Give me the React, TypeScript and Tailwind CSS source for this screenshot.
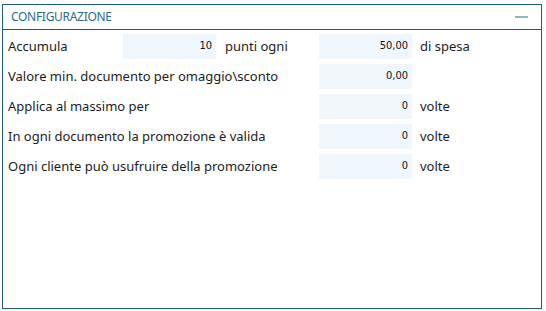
const labelFont = { fontFamily: '"Noto Sans", "Liberation Sans", sans-serif' };

function Field({ value }: { value: string }) {
  return (
    <div className="h-[25px] bg-[#eff7fd] flex items-center justify-end pr-[4px] text-[11px] text-[#111] font-['DejaVu_Sans_Condensed','DejaVu_Sans',sans-serif]">
      {value}
    </div>
  );
}

function Label({ children, className = "" }: { children: React.ReactNode; className?: string }) {
  return (
    <div className={`h-[25px] flex items-center text-[13px] text-[#1c1c1c] whitespace-nowrap ${className}`}>
      {children}
    </div>
  );
}

export default function App() {
  return (
    <div className="w-[546px] h-[311px] bg-white pt-[4px] pl-[2px]" style={labelFont}>
      <div className="w-[540px] h-[305px] border border-[#215c74] flex flex-col">
        <div className="h-[25px] border-b border-[#215c74] flex items-center justify-between pl-[8px] pr-[13px]">
          <span className="text-[12px] text-[#2c6a8a] tracking-tight">CONFIGURAZIONE</span>
          <span className="block w-[13px] h-[2px] bg-[#8eb6c6]" />
        </div>
        <div className="grid grid-cols-[115px_93px_103px_93px_1fr] gap-y-[5px] pt-[4px] pl-[5px]">
          <Label>Accumula</Label>
          <Field value="10" />
          <Label className="pl-[9px]">punti ogni</Label>
          <Field value="50,00" />
          <Label className="pl-[8px]">di spesa</Label>

          <Label className="col-span-3">Valore min. documento per omaggio\sconto</Label>
          <Field value="0,00" />
          <div />

          <Label className="col-span-3">Applica al massimo per</Label>
          <Field value="0" />
          <Label className="pl-[8px]">volte</Label>

          <Label className="col-span-3">In ogni documento la promozione è valida</Label>
          <Field value="0" />
          <Label className="pl-[8px]">volte</Label>

          <Label className="col-span-3">Ogni cliente può usufruire della promozione</Label>
          <Field value="0" />
          <Label className="pl-[8px]">volte</Label>
        </div>
      </div>
    </div>
  );
}
